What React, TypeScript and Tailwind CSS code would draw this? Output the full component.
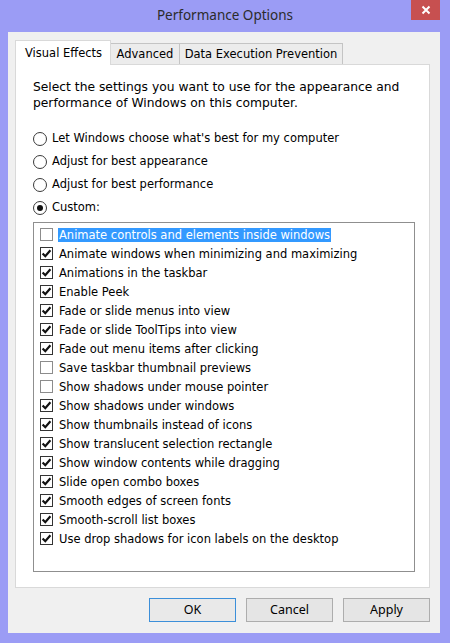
import React from "react";

const effects: { label: string; checked: boolean }[] = [
  { label: "Animate controls and elements inside windows", checked: false },
  { label: "Animate windows when minimizing and maximizing", checked: true },
  { label: "Animations in the taskbar", checked: true },
  { label: "Enable Peek", checked: true },
  { label: "Fade or slide menus into view", checked: true },
  { label: "Fade or slide ToolTips into view", checked: true },
  { label: "Fade out menu items after clicking", checked: true },
  { label: "Save taskbar thumbnail previews", checked: false },
  { label: "Show shadows under mouse pointer", checked: false },
  { label: "Show shadows under windows", checked: true },
  { label: "Show thumbnails instead of icons", checked: true },
  { label: "Show translucent selection rectangle", checked: true },
  { label: "Show window contents while dragging", checked: true },
  { label: "Slide open combo boxes", checked: true },
  { label: "Smooth edges of screen fonts", checked: true },
  { label: "Smooth-scroll list boxes", checked: true },
  { label: "Use drop shadows for icon labels on the desktop", checked: true },
];

const radios = [
  { label: "Let Windows choose what's best for my computer", on: false },
  { label: "Adjust for best appearance", on: false },
  { label: "Adjust for best performance", on: false },
  { label: "Custom:", on: true },
];

const Radio = ({ on }: { on: boolean }) => (
  <span className="w-[14px] h-[14px] rounded-full border border-[#3a3a3a] bg-white flex items-center justify-center shrink-0">
    {on && <span className="w-[6px] h-[6px] rounded-full bg-[#111]" />}
  </span>
);

const Check = ({ checked }: { checked: boolean }) => (
  <span
    className={
      checked
        ? "w-[13px] h-[13px] border border-[#333] bg-white flex items-center justify-center shrink-0"
        : "w-[13px] h-[13px] border border-[#8c8c8c] bg-white shrink-0"
    }
  >
    {checked && (
      <svg width="11" height="11" viewBox="0 0 11 11">
        <path d="M1.6 5.4 L4.3 8.2 L9.4 2.3" fill="none" stroke="#111" strokeWidth="2.2" />
      </svg>
    )}
  </span>
);

export default function App() {
  return (
    <div className="w-[450px] h-[643px] bg-[#9b9cf5] flex flex-col font-['DejaVu_Sans',sans-serif] text-[11.5px] text-black">
      {/* title bar */}
      <div className="relative h-[32px] flex items-center justify-center shrink-0">
        <span className="font-['Noto_Sans',sans-serif] text-[13.5px] text-[#2b2b2b] -mt-[1px]">Performance Options</span>
        <div className="absolute right-[10px] top-0 w-[29px] h-[20px] bg-[#c75050] flex items-center justify-center">
          <svg width="10" height="10" viewBox="0 0 10 10">
            <path d="M1.5 1.5 L8.5 8.5 M8.5 1.5 L1.5 8.5" stroke="#fff" strokeWidth="2" />
          </svg>
        </div>
      </div>

      {/* client */}
      <div className="ml-[8px] mr-[10px] h-[601px] bg-[#f0f0f0] pt-[8px] pl-[7px] pr-[10px] flex flex-col">
        {/* tabs */}
        <div className="flex items-end h-[24px]">
          <div className="relative z-10 h-[25px] -mb-px w-[96px] bg-white border border-b-0 border-[#d9d9d9] pl-[9px] pt-[4px]">
            Visual Effects
          </div>
          <div className="h-[21px] w-[69px] bg-[#ececec] border border-b-0 border-l-0 border-[#c4c4c4] flex items-center justify-center pt-[1px]">
            Advanced
          </div>
          <div className="h-[21px] w-[163px] bg-[#ececec] border border-b-0 border-l-0 border-[#c4c4c4] flex items-center justify-center pt-[1px]">
            Data Execution Prevention
          </div>
        </div>

        {/* panel */}
        <div className="w-[415px] bg-white border border-[#d9d9d9] pt-[14px] pb-[15px] pl-[17px] pr-[14px]">
          <p className="leading-[16px] text-[12.3px]">
            Select the settings you want to use for the appearance and
            <br />
            performance of Windows on this computer.
          </p>

          <div className="mt-[16px] flex flex-col">
            {radios.map((r) => (
              <div key={r.label} className="h-[23px] flex items-center gap-[5px]">
                <Radio on={r.on} />
                <span>{r.label}</span>
              </div>
            ))}
          </div>

          <div className="mt-[3px] h-[350px] border border-[#8f8f8f] bg-white pt-[2px] pl-[6px] flex flex-col">
            {effects.map((e, i) => (
              <div key={e.label} className="h-[19px] flex items-center gap-[6px]">
                <Check checked={e.checked} />
                <span
                  className={
                    i === 0
                      ? "bg-[#3399ff] text-white leading-[14px] px-[1px] -ml-[1px]"
                      : "leading-[14px]"
                  }
                >
                  {e.label}
                </span>
              </div>
            ))}
          </div>
        </div>

        {/* buttons */}
        <div className="mt-[10px] flex justify-end gap-[10px] w-[415px] font-['Noto_Sans',sans-serif] text-[12.5px]">
          <button className="w-[87px] h-[24px] border border-[#3c8fd9] bg-[#e9e9e9] flex items-center justify-center">
            OK
          </button>
          <button className="w-[87px] h-[24px] border border-[#adadad] bg-[#e5e5e5] flex items-center justify-center">
            Cancel
          </button>
          <button className="w-[87px] h-[24px] border border-[#adadad] bg-[#e5e5e5] flex items-center justify-center">
            Apply
          </button>
        </div>
      </div>
    </div>
  );
}
